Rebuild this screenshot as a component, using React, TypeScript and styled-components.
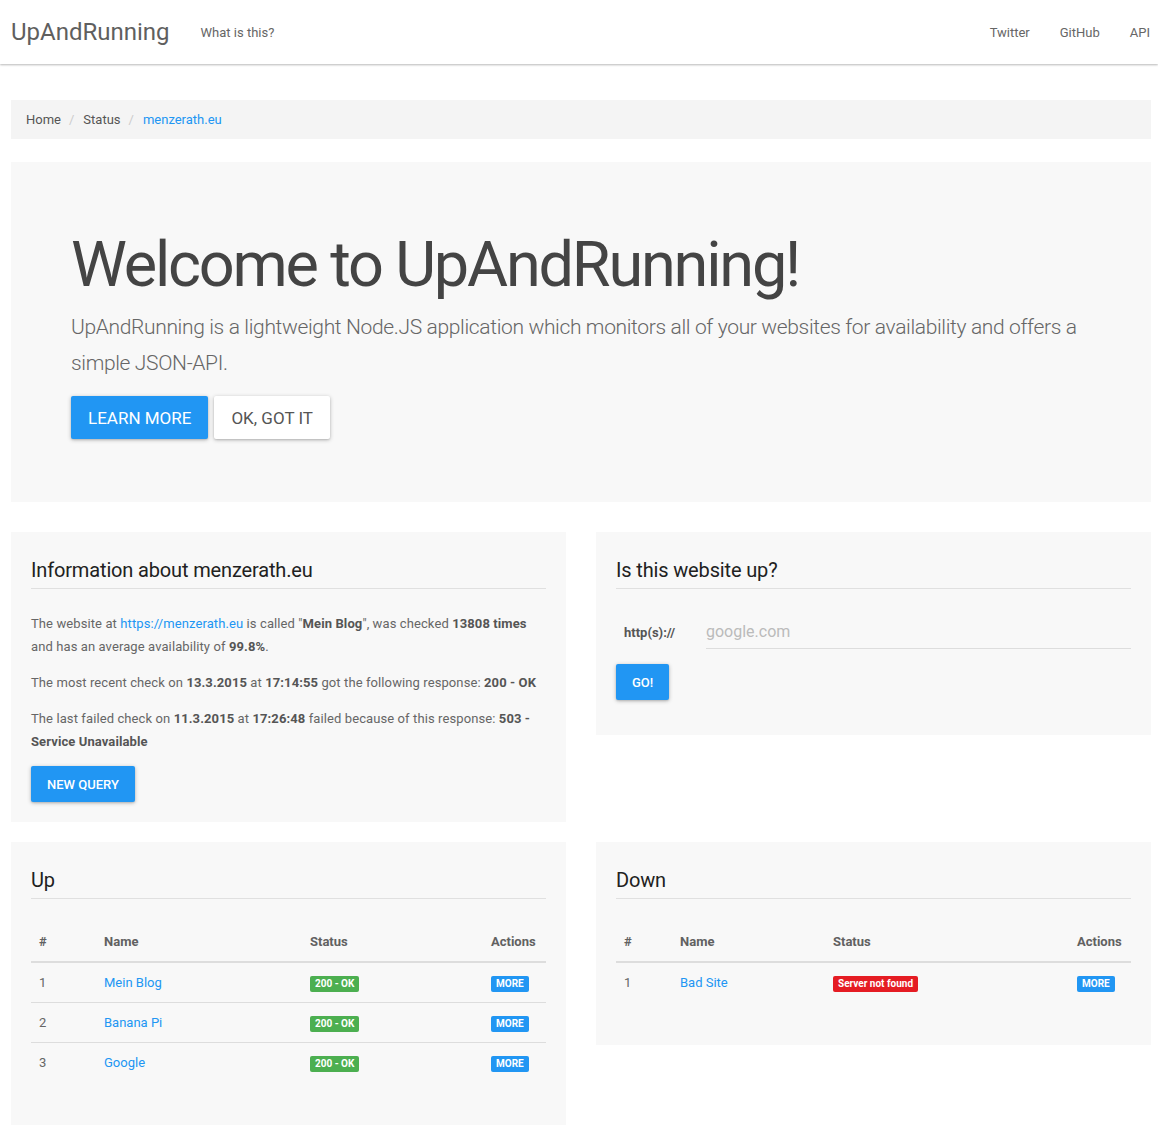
import React from 'react';
import styled, { createGlobalStyle } from 'styled-components';

const BLUE = '#2196f3';
const GREEN = '#4caf50';
const RED = '#e51c23';
const TEXT = '#666';
const DARK = '#212121';
const LINE = '#e0e0e0';
const WELL = '#f8f8f8';

const GlobalStyle = createGlobalStyle`
  html, body {
    margin: 0;
    padding: 0;
    background: #fff;
  }
  body {
    font-family: Roboto, "Liberation Sans", Arial, sans-serif;
    font-size: 13px;
    color: ${TEXT};
  }
  * {
    box-sizing: border-box;
  }
`;

const Navbar = styled.nav`
  height: 64px;
  background: #fff;
  box-shadow: 0 1px 2px rgba(0, 0, 0, 0.28);
  display: flex;
  align-items: center;
  padding: 0 8px 0 11px;
`;

const Brand = styled.a`
  font-size: 24px;
  color: #5f5f5f;
  text-decoration: none;
  margin-right: 31px;
`;

const NavLinks = styled.div<{ right?: boolean }>`
  display: flex;
  gap: 30px;
  margin-left: ${(props) => (props.right ? 'auto' : '0')};
`;

const NavLink = styled.a`
  font-size: 13px;
  color: #666;
  text-decoration: none;
`;

const Container = styled.main`
  width: 1140px;
  margin: 0 0 0 11px;
  padding: 36px 0 20px;
`;

const Breadcrumb = styled.ol`
  list-style: none;
  margin: 0 0 23px;
  padding: 10px 15px;
  line-height: 19px;
  background: #f4f4f4;
  display: flex;

  li + li::before {
    content: '/';
    color: #ccc;
    padding: 0 9px 0 8px;
  }
`;

const Crumb = styled.li<{ active?: boolean }>`
  color: ${(props) => (props.active ? BLUE : '#555')};
`;

const Jumbotron = styled.section`
  background: ${WELL};
  padding: 68px 60px 48px;
  margin-bottom: 30px;
`;

const Headline = styled.h1`
  font-size: 63px;
  font-weight: 400;
  line-height: 69px;
  letter-spacing: -2.2px;
  color: #444;
  margin: 0 0 10px;
`;

const Lead = styled.p`
  font-size: 21px;
  font-weight: 300;
  line-height: 36px;
  letter-spacing: -0.35px;
  color: ${TEXT};
  margin: 0 0 15px;
`;

const ButtonRow = styled.div`
  display: flex;
  gap: 6px;
  margin-bottom: 15px;
`;

const Button = styled.button<{ size?: 'lg' | 'md'; light?: boolean }>`
  height: ${(props) => (props.size === 'lg' ? 43 : 36)}px;
  padding: 0 ${(props) => (props.size === 'lg' ? 17 : 16)}px;
  font-family: Roboto, "Liberation Sans", Arial, sans-serif;
  font-size: ${(props) => (props.size === 'lg' ? 17 : 13)}px;
  font-weight: ${(props) => (props.size === 'lg' ? 400 : 500)};
  text-transform: uppercase;
  border: none;
  border-radius: 2px;
  color: ${(props) => (props.light ? '#555' : '#fff')};
  background: ${(props) => (props.light ? '#fff' : BLUE)};
  box-shadow: 0 1px 4px rgba(0, 0, 0, 0.24), 0 1px 2px rgba(0, 0, 0, 0.12);
  cursor: pointer;
`;

const Grid = styled.div`
  display: grid;
  grid-template-columns: 555px 555px;
  column-gap: 30px;
  row-gap: 20px;
  align-items: start;
`;

const Panel = styled.section`
  background: ${WELL};
  padding: 20px;
`;

const PanelTitle = styled.h3`
  font-size: 20px;
  font-weight: 400;
  line-height: 24px;
  letter-spacing: -0.15px;
  color: ${DARK};
  margin: 0 0 23px;
  padding: 6px 0 6px;
  border-bottom: 1px solid ${LINE};
`;

const Para = styled.p`
  margin: 0 0 13px;
  line-height: 23px;
  letter-spacing: 0.1px;
  color: ${TEXT};

  b {
    color: #555;
    font-weight: 700;
  }
`;

const Link = styled.a`
  color: ${BLUE};
  text-decoration: none;
`;

const FormRow = styled.div`
  display: flex;
  align-items: center;
  height: 37px;
  margin-bottom: 15px;
`;

const InputLabel = styled.label`
  width: 90px;
  padding-left: 8px;
  padding-top: 4px;
  font-weight: 700;
  color: #555;
`;

const Input = styled.input`
  flex: 1;
  height: 37px;
  border: none;
  border-bottom: 1px solid #ddd;
  background: transparent;
  font-family: Roboto, "Liberation Sans", Arial, sans-serif;
  font-size: 16px;
  color: #555;
  outline: none;
  padding: 3px 0 0;

  &::placeholder {
    color: #bbb;
  }
`;

const FormActions = styled.div`
  margin-bottom: 15px;
`;

const Table = styled.table`
  width: 100%;
  table-layout: fixed;
  border-collapse: collapse;
  margin: 23px 0 23px;

  th {
    text-align: left;
    font-weight: 700;
    color: #616161;
    padding: 10px 8px;
    line-height: 19px;
    border-bottom: 2px solid #ddd;
  }

  td {
    padding: 10px 8px;
    line-height: 19px;
    color: ${TEXT};
    vertical-align: middle;
  }

  tbody tr + tr td {
    border-top: 1px solid #ddd;
  }
`;

const Col = styled.col<{ w?: number }>`
  width: ${(props) => (props.w ? `${props.w}px` : 'auto')};
`;

const Label = styled.span<{ tone: 'ok' | 'bad' | 'info' }>`
  display: inline-block;
  height: 16px;
  line-height: 16px;
  padding: 0 5px;
  border-radius: 2px;
  font-size: 10px;
  font-weight: 700;
  color: #fff;
  vertical-align: middle;
  background: ${(props) => (props.tone === 'ok' ? GREEN : props.tone === 'bad' ? RED : BLUE)};
`;

interface Site {
  id: number;
  name: string;
  status: string;
}

const upSites: Site[] = [
  { id: 1, name: 'Mein Blog', status: '200 - OK' },
  { id: 2, name: 'Banana Pi', status: '200 - OK' },
  { id: 3, name: 'Google', status: '200 - OK' },
];

const downSites: Site[] = [{ id: 1, name: 'Bad Site', status: 'Server not found' }];

const SiteTable: React.FC<{ sites: Site[]; widths: number[]; tone: 'ok' | 'bad' }> = ({ sites, widths, tone }) => (
  <Table>
    <colgroup>
      {widths.map((w, i) => (
        <Col key={i} w={w} />
      ))}
      <Col />
    </colgroup>
    <thead>
      <tr>
        <th>#</th>
        <th>Name</th>
        <th>Status</th>
        <th>Actions</th>
      </tr>
    </thead>
    <tbody>
      {sites.map((site) => (
        <tr key={site.id}>
          <td>{site.id}</td>
          <td>
            <Link href="#">{site.name}</Link>
          </td>
          <td>
            <Label tone={tone}>{site.status}</Label>
          </td>
          <td>
            <Label tone="info">MORE</Label>
          </td>
        </tr>
      ))}
    </tbody>
  </Table>
);

const App: React.FC = () => {
  return (
    <>
      <GlobalStyle />
      <Navbar>
        <Brand href="#">UpAndRunning</Brand>
        <NavLinks>
          <NavLink href="#">What is this?</NavLink>
        </NavLinks>
        <NavLinks right>
          <NavLink href="#">Twitter</NavLink>
          <NavLink href="#">GitHub</NavLink>
          <NavLink href="#">API</NavLink>
        </NavLinks>
      </Navbar>

      <Container>
        <Breadcrumb>
          <Crumb>Home</Crumb>
          <Crumb>Status</Crumb>
          <Crumb active>menzerath.eu</Crumb>
        </Breadcrumb>

        <Jumbotron>
          <Headline>Welcome to UpAndRunning!</Headline>
          <Lead>
            UpAndRunning is a lightweight Node.JS application which monitors all of your websites for availability and
            offers a simple JSON-API.
          </Lead>
          <ButtonRow>
            <Button size="lg">Learn more</Button>
            <Button size="lg" light>
              OK, got it
            </Button>
          </ButtonRow>
        </Jumbotron>

        <Grid>
          <Panel>
            <PanelTitle>Information about menzerath.eu</PanelTitle>
            <Para>
              The website at <Link href="#">https://menzerath.eu</Link> is called "<b>Mein Blog</b>", was checked{' '}
              <b>13808 times</b> and has an average availability of <b>99.8%</b>.
            </Para>
            <Para>
              The most recent check on <b>13.3.2015</b> at <b>17:14:55</b> got the following response:{' '}
              <b>200 - OK</b>
            </Para>
            <Para>
              The last failed check on <b>11.3.2015</b> at <b>17:26:48</b> failed because of this response:{' '}
              <b>503 - Service Unavailable</b>
            </Para>
            <Button>New query</Button>
          </Panel>

          <Panel>
            <PanelTitle>Is this website up?</PanelTitle>
            <FormRow>
              <InputLabel>http(s)://</InputLabel>
              <Input placeholder="google.com" />
            </FormRow>
            <FormActions>
              <Button>GO!</Button>
            </FormActions>
          </Panel>

          <Panel>
            <PanelTitle>Up</PanelTitle>
            <SiteTable sites={upSites} widths={[65, 206, 181]} tone="ok" />
          </Panel>

          <Panel>
            <PanelTitle>Down</PanelTitle>
            <SiteTable sites={downSites} widths={[56, 153, 244]} tone="bad" />
          </Panel>
        </Grid>
      </Container>
    </>
  );
};

export default App;
